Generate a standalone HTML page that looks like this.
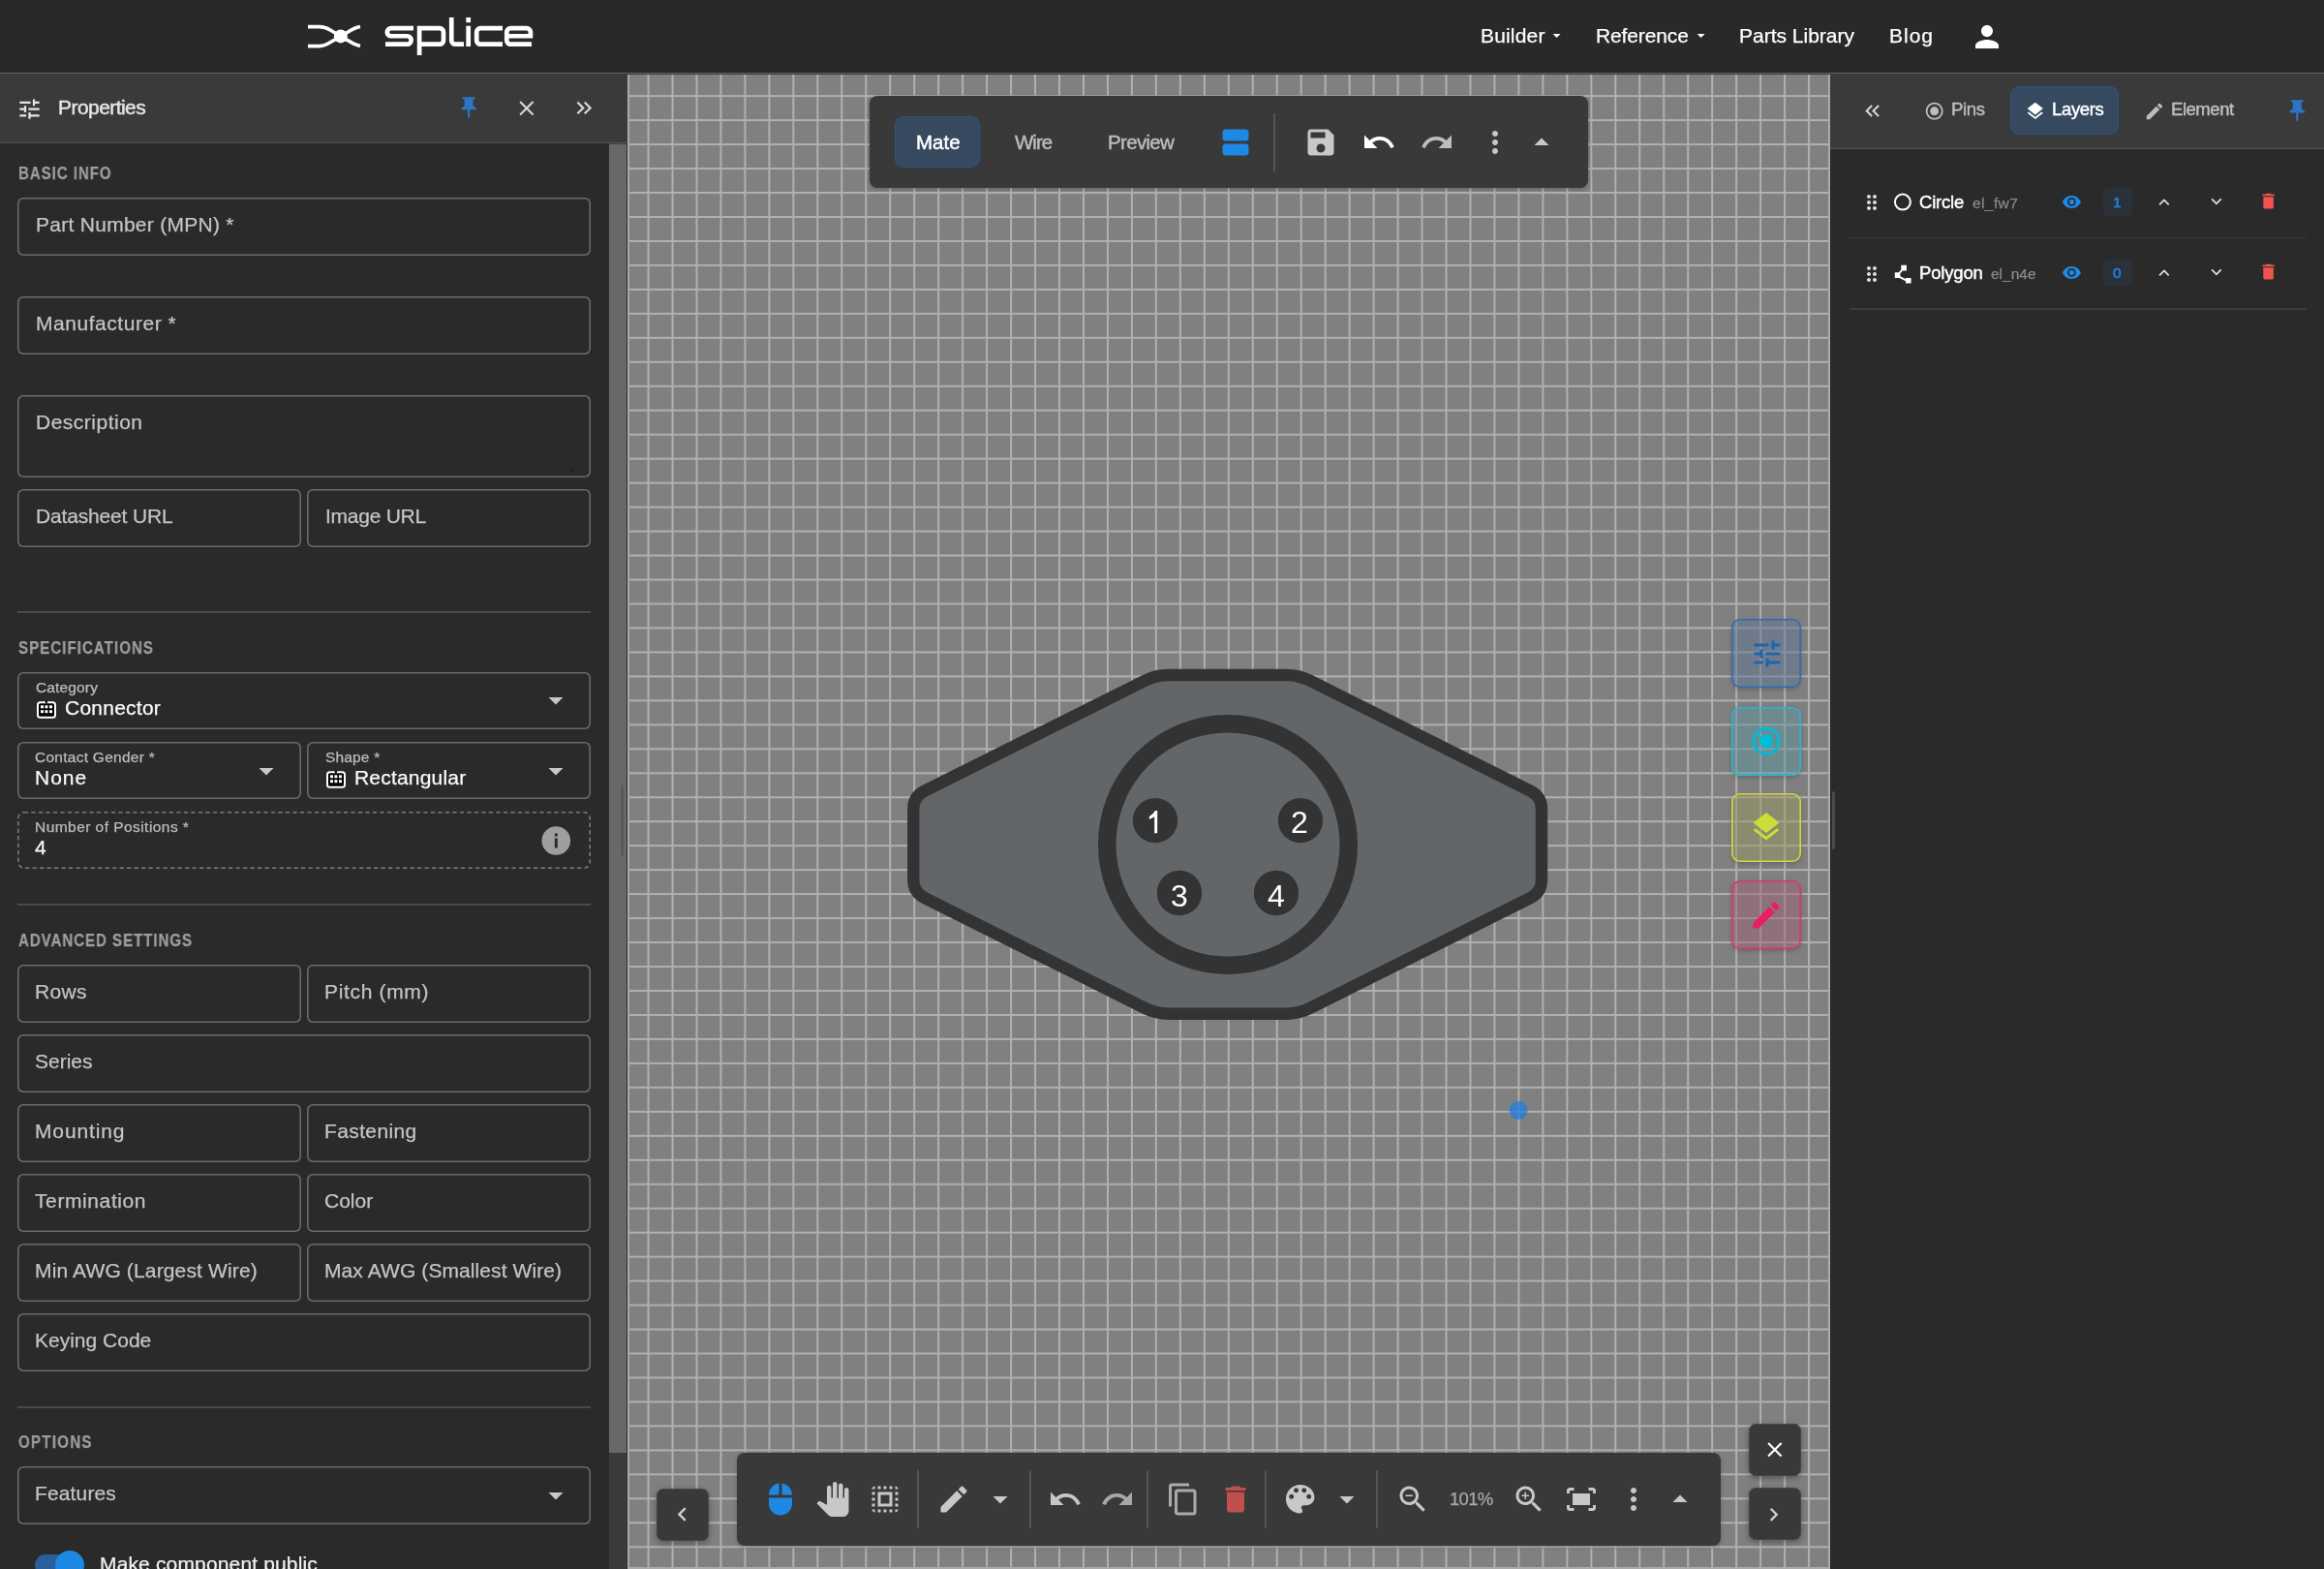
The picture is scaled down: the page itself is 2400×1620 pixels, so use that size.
<!DOCTYPE html>
<html><head><meta charset="utf-8"><style>
*{box-sizing:border-box;margin:0;padding:0}
html,body{width:2400px;height:1620px;overflow:hidden;background:#2a2a2a;font-family:"Liberation Sans",sans-serif}
.a{position:absolute}
.t{white-space:nowrap;will-change:transform;-webkit-text-stroke:0.25px currentColor}
.fld{box-shadow:inset 0 0 0 1.6px #6a6a6a;border-radius:6px}
.div{height:2px;background:#4a4a4a;left:18px;width:592px}
svg{display:block;overflow:visible}
</style></head><body>
<div class="a" style="left:0;top:0;width:2400px;height:75px;background:#292929"></div>
<div class="a" style="left:0;top:75px;width:2400px;height:1px;background:#626262"></div>
<div class="a" style="left:0;top:76px;width:2400px;height:1px;background:#383838"></div>
<svg class="a" style="left:0;top:0" width="600" height="75" viewBox="0 0 600 75">
<g fill="none" stroke="#fff" stroke-width="3.6">
<path d="M318,27.6 H330 C334.5,27.6 337.5,28.8 341,31 L352,37.4 L341,43.8 C337.5,46 334.5,47.6 330,47.6 H318"/>
<path d="M372,27.4 C367,28.3 363,30.5 359,33.2 L352,37.4 L359,41.6 C363,44.3 367,46.5 372,47.6"/>
</g>
<circle cx="351.8" cy="37.4" r="7" fill="#fff"/>
<g fill="none" stroke="#fff" stroke-width="4.7">
<path d="M427,29.2 H403.85 A4,4 0 0 0 399.85,33.2 V33.25 A4,4 0 0 0 403.85,37.25 H420.55 A4,4 0 0 1 424.55,41.25 V41.65 A4,4 0 0 1 420.55,45.65 H398"/>
<path d="M433.1,57 V29.2 H454 A4,4 0 0 1 458,33.2 V41.65 A4,4 0 0 1 454,45.65 H433.1"/>
<path d="M466.25,18 V41.65 A4,4 0 0 0 470.25,45.65 H479"/>
<path d="M483.7,18 V23.2 M483.7,26.8 V48"/>
<path d="M519,29.2 H496.2 A4,4 0 0 0 492.2,33.2 V41.65 A4,4 0 0 0 496.2,45.65 H519"/>
<path d="M523.3,37.25 H547.9 V33.2 A4,4 0 0 0 543.9,29.2 H527.3 A4,4 0 0 0 523.3,33.2 V41.65 A4,4 0 0 0 527.3,45.65 H549"/>
</g></svg>
<div class="a t" style="left:1529.0px;top:24.0px;font-size:21px;line-height:25px;color:#fff;font-weight:normal;letter-spacing:0.167px;">Builder</div>
<svg class="a" style="left:1598.4px;top:27.4px;" width="19.2" height="19.2" viewBox="0 0 24 24"><path fill="#fff" d="M7 10l5 5 5-5z"/></svg>
<div class="a t" style="left:1647.7px;top:24.0px;font-size:21px;line-height:25px;color:#fff;font-weight:normal;letter-spacing:-0.130px;">Reference</div>
<svg class="a" style="left:1747.4px;top:27.4px;" width="19.2" height="19.2" viewBox="0 0 24 24"><path fill="#fff" d="M7 10l5 5 5-5z"/></svg>
<div class="a t" style="left:1796.0px;top:24.0px;font-size:21px;line-height:25px;color:#fff;font-weight:normal;letter-spacing:0.000px;">Parts Library</div>
<div class="a t" style="left:1950.5px;top:24.0px;font-size:21px;line-height:25px;color:#fff;font-weight:normal;letter-spacing:1.000px;">Blog</div>
<svg class="a" style="left:2033.6px;top:19.8px;" width="36" height="36" viewBox="0 0 24 24"><path fill="#fff" d="M12 12c2.21 0 4-1.79 4-4s-1.79-4-4-4-4 1.79-4 4 1.79 4 4 4zm0 2c-2.67 0-8 1.34-8 4v2h16v-2c0-2.66-5.33-4-8-4z"/></svg>
<div class="a" style="left:0;top:77px;width:648px;height:70px;background:#3a3a3a"></div>
<div class="a" style="left:0;top:147px;width:648px;height:1px;background:#555"></div>
<svg class="a" style="left:17.0px;top:98.6px;" width="27" height="27" viewBox="0 0 24 24"><path fill="#e6e6e6" d="M3 17v2h6v-2H3zM3 5v2h10V5H3zm10 16v-2h8v-2h-8v-2h-2v6h2zM7 9v2H3v2h4v2h2V9H7zm14 4v-2H11v2h10zm-6-4h2V7h4V5h-4V3h-2v6z"/></svg>
<div class="a t" style="left:60.2px;top:97.8px;font-size:21px;line-height:25px;color:#e6e6e6;font-weight:normal;letter-spacing:-0.554px;-webkit-text-stroke:0.45px currentColor;">Properties</div>
<svg class="a" style="left:471.1px;top:97.6px;" width="26.3" height="26.3" viewBox="0 0 24 24"><path fill="#2d74c4" d="M16 9V4h1c.55 0 1-.45 1-1s-.45-1-1-1H7c-.55 0-1 .45-1 1s.45 1 1 1h1v5c0 1.66-1.34 3-3 3v2h5.97v7l1 1 1-1v-7H19v-2c-1.66 0-3-1.34-3-3z"/></svg>
<svg class="a" style="left:531.4px;top:98.6px;" width="25.7" height="25.7" viewBox="0 0 24 24"><path fill="#d6d6d6" d="M19 6.41L17.59 5 12 10.59 6.41 5 5 6.41 10.59 12 5 17.59 6.41 19 12 13.41 17.59 19 19 17.59 13.41 12z"/></svg>
<svg class="a" style="left:590.3px;top:97.6px;" width="26.8" height="26.8" viewBox="0 0 24 24"><path fill="#d6d6d6" d="M6.41 6L5 7.41 9.58 12 5 16.59 6.41 18l6-6zM13 6l-1.41 1.41L16.17 12l-4.58 4.59L13 18l6-6z"/></svg>
<div class="a" style="left:629px;top:148px;width:19px;height:1472px;background:#3b3b3b"></div>
<div class="a" style="left:629px;top:149px;width:17.5px;height:1351px;background:#686868"></div>
<div class="a" style="left:646.5px;top:148px;width:1.5px;height:1472px;background:#2f2f2f"></div>
<div class="a t" style="left:18.5px;top:168.8px;font-size:17.5px;line-height:21px;color:#9e9e9e;font-weight:bold;letter-spacing:1.111px;transform:scaleX(0.86);transform-origin:0 0;">BASIC INFO</div>
<div class="a fld" style="left:18px;top:204px;width:592px;height:60px"></div>
<div class="a t" style="left:37.0px;top:218.5px;font-size:21px;line-height:25px;color:#c4c4c4;font-weight:normal;letter-spacing:0.278px;">Part Number (MPN) *</div>
<div class="a fld" style="left:18px;top:306px;width:592px;height:60px"></div>
<div class="a t" style="left:37.0px;top:320.5px;font-size:21px;line-height:25px;color:#c4c4c4;font-weight:normal;letter-spacing:0.538px;">Manufacturer *</div>
<div class="a fld" style="left:18px;top:408px;width:592px;height:85px"></div>
<div class="a t" style="left:37.0px;top:422.9px;font-size:21px;line-height:25px;color:#c4c4c4;font-weight:normal;letter-spacing:0.500px;">Description</div>
<svg class="a" style="left:588px;top:483px" width="6" height="6"><circle cx="3" cy="3" r="1" fill="#111"/></svg>
<div class="a fld" style="left:18px;top:505px;width:293px;height:60px"></div>
<div class="a t" style="left:37.0px;top:519.8px;font-size:21px;line-height:25px;color:#c4c4c4;font-weight:normal;letter-spacing:-0.167px;">Datasheet URL</div>
<div class="a fld" style="left:317px;top:505px;width:293px;height:60px"></div>
<div class="a t" style="left:336.2px;top:519.8px;font-size:21px;line-height:25px;color:#c4c4c4;font-weight:normal;letter-spacing:-0.250px;">Image URL</div>
<div class="a div" style="top:631px"></div>
<div class="a t" style="left:18.5px;top:658.7px;font-size:17.5px;line-height:21px;color:#9e9e9e;font-weight:bold;letter-spacing:1.231px;transform:scaleX(0.86);transform-origin:0 0;">SPECIFICATIONS</div>
<div class="a fld" style="left:18px;top:694px;width:592px;height:59px"></div>
<div class="a t" style="left:36.5px;top:700.1px;font-size:15.5px;line-height:19px;color:#bdbdbd;font-weight:normal;letter-spacing:0.143px;">Category</div>
<div class="a t" style="left:66.7px;top:718.0px;font-size:21px;line-height:25px;color:#fafafa;font-weight:normal;letter-spacing:0.245px;">Connector</div>
<svg class="a" style="left:37px;top:722.5px" width="22" height="20" viewBox="0 0 22 20"><rect x="2" y="2.2" width="18" height="15.5" rx="2.5" fill="#000" stroke="#fff" stroke-width="2"/><path d="M9.6 1 h2.6 l-0.6 2.5 h-1.4z" fill="#000"/><g fill="#fff"><rect x="5" y="5.3" width="3" height="3"/><rect x="9.4" y="5.3" width="3" height="3"/><rect x="14" y="5.3" width="3" height="3"/><rect x="5" y="10.2" width="3" height="3"/><rect x="9.4" y="10.2" width="3" height="3"/><rect x="14" y="10.2" width="3" height="3"/></g></svg>
<svg class="a" style="left:556.1px;top:705.4px;" width="36" height="36" viewBox="0 0 24 24"><path fill="#c8c8c8" d="M7 10l5 5 5-5z"/></svg>
<div class="a fld" style="left:18px;top:766px;width:293px;height:59px"></div>
<div class="a t" style="left:36.1px;top:772.1px;font-size:15.5px;line-height:19px;color:#bdbdbd;font-weight:normal;letter-spacing:0.267px;">Contact Gender *</div>
<div class="a t" style="left:36.1px;top:790.3px;font-size:21px;line-height:25px;color:#fafafa;font-weight:normal;letter-spacing:1.000px;">None</div>
<svg class="a" style="left:257.3px;top:777.5px;" width="36" height="36" viewBox="0 0 24 24"><path fill="#c8c8c8" d="M7 10l5 5 5-5z"/></svg>
<div class="a fld" style="left:317px;top:766px;width:293px;height:59px"></div>
<div class="a t" style="left:335.7px;top:772.1px;font-size:15.5px;line-height:19px;color:#bdbdbd;font-weight:normal;letter-spacing:0.168px;">Shape *</div>
<svg class="a" style="left:336px;top:794.5px" width="22" height="20" viewBox="0 0 22 20"><rect x="2" y="2.2" width="18" height="15.5" rx="2.5" fill="#000" stroke="#fff" stroke-width="2"/><path d="M9.6 1 h2.6 l-0.6 2.5 h-1.4z" fill="#000"/><g fill="#fff"><rect x="5" y="5.3" width="3" height="3"/><rect x="9.4" y="5.3" width="3" height="3"/><rect x="14" y="5.3" width="3" height="3"/><rect x="5" y="10.2" width="3" height="3"/><rect x="9.4" y="10.2" width="3" height="3"/><rect x="14" y="10.2" width="3" height="3"/></g></svg>
<div class="a t" style="left:366.4px;top:790.3px;font-size:21px;line-height:25px;color:#fafafa;font-weight:normal;letter-spacing:0.200px;">Rectangular</div>
<svg class="a" style="left:556.1px;top:777.5px;" width="36" height="36" viewBox="0 0 24 24"><path fill="#c8c8c8" d="M7 10l5 5 5-5z"/></svg>
<svg class="a" style="left:18px;top:838px" width="592" height="59"><rect x="0.8" y="0.8" width="590.4" height="57.4" rx="6" fill="none" stroke="#7a7a7a" stroke-width="1.6" stroke-dasharray="4.4 3.1"/></svg>
<div class="a t" style="left:36.1px;top:844.4px;font-size:15.5px;line-height:19px;color:#bdbdbd;font-weight:normal;letter-spacing:0.450px;">Number of Positions *</div>
<div class="a t" style="left:36.1px;top:861.8px;font-size:21px;line-height:25px;color:#fafafa;font-weight:normal;">4</div>
<svg class="a" style="left:559px;top:853px" width="30" height="30" viewBox="0 0 30 30"><circle cx="15.3" cy="15" r="14.8" fill="#9e9e9e"/><rect x="13.8" y="12.5" width="3" height="10" fill="#2a2a2a"/><rect x="13.8" y="7.5" width="3" height="3" fill="#2a2a2a"/></svg>
<div class="a div" style="top:933px"></div>
<div class="a t" style="left:18.5px;top:960.8px;font-size:17.5px;line-height:21px;color:#9e9e9e;font-weight:bold;letter-spacing:1.125px;transform:scaleX(0.86);transform-origin:0 0;">ADVANCED SETTINGS</div>
<div class="a fld" style="left:18px;top:996px;width:293px;height:60px"></div>
<div class="a t" style="left:36.4px;top:1010.5px;font-size:21px;line-height:25px;color:#c4c4c4;font-weight:normal;letter-spacing:0.333px;">Rows</div>
<div class="a fld" style="left:317px;top:996px;width:293px;height:60px"></div>
<div class="a t" style="left:335.4px;top:1010.5px;font-size:21px;line-height:25px;color:#c4c4c4;font-weight:normal;letter-spacing:0.667px;">Pitch (mm)</div>
<div class="a fld" style="left:18px;top:1068px;width:592px;height:60px"></div>
<div class="a t" style="left:36.4px;top:1082.5px;font-size:21px;line-height:25px;color:#c4c4c4;font-weight:normal;letter-spacing:0.000px;">Series</div>
<div class="a fld" style="left:18px;top:1140px;width:293px;height:60px"></div>
<div class="a t" style="left:36.4px;top:1154.5px;font-size:21px;line-height:25px;color:#c4c4c4;font-weight:normal;letter-spacing:0.855px;">Mounting</div>
<div class="a fld" style="left:317px;top:1140px;width:293px;height:60px"></div>
<div class="a t" style="left:335.4px;top:1154.5px;font-size:21px;line-height:25px;color:#c4c4c4;font-weight:normal;letter-spacing:0.375px;">Fastening</div>
<div class="a fld" style="left:18px;top:1212px;width:293px;height:60px"></div>
<div class="a t" style="left:36.4px;top:1226.5px;font-size:21px;line-height:25px;color:#c4c4c4;font-weight:normal;letter-spacing:0.600px;">Termination</div>
<div class="a fld" style="left:317px;top:1212px;width:293px;height:60px"></div>
<div class="a t" style="left:335.4px;top:1226.5px;font-size:21px;line-height:25px;color:#c4c4c4;font-weight:normal;letter-spacing:-0.000px;">Color</div>
<div class="a fld" style="left:18px;top:1284px;width:293px;height:60px"></div>
<div class="a t" style="left:36.4px;top:1298.5px;font-size:21px;line-height:25px;color:#c4c4c4;font-weight:normal;letter-spacing:0.142px;">Min AWG (Largest Wire)</div>
<div class="a fld" style="left:317px;top:1284px;width:293px;height:60px"></div>
<div class="a t" style="left:335.4px;top:1298.5px;font-size:21px;line-height:25px;color:#c4c4c4;font-weight:normal;letter-spacing:0.091px;">Max AWG (Smallest Wire)</div>
<div class="a fld" style="left:18px;top:1356px;width:592px;height:60px"></div>
<div class="a t" style="left:36.4px;top:1370.5px;font-size:21px;line-height:25px;color:#c4c4c4;font-weight:normal;letter-spacing:-0.000px;">Keying Code</div>
<div class="a div" style="top:1452px"></div>
<div class="a t" style="left:18.5px;top:1479.0px;font-size:17.5px;line-height:21px;color:#9e9e9e;font-weight:bold;letter-spacing:1.502px;transform:scaleX(0.86);transform-origin:0 0;">OPTIONS</div>
<div class="a fld" style="left:18px;top:1514px;width:592px;height:60px"></div>
<div class="a t" style="left:36.4px;top:1528.5px;font-size:21px;line-height:25px;color:#c4c4c4;font-weight:normal;letter-spacing:0.143px;">Features</div>
<svg class="a" style="left:556.1px;top:1525.5px;" width="36" height="36" viewBox="0 0 24 24"><path fill="#c8c8c8" d="M7 10l5 5 5-5z"/></svg>
<div class="a" style="left:36px;top:1605px;width:50px;height:22px;border-radius:11px;background:#2a5f9e"></div>
<div class="a" style="left:57px;top:1600.7px;width:30px;height:30px;border-radius:15px;background:#1e88e5"></div>
<div class="a t" style="left:103.3px;top:1602.3px;font-size:21px;line-height:25px;color:#f0f0f0;font-weight:normal;letter-spacing:0.150px;">Make component public</div>
<div class="a" style="left:648px;top:77px;width:1242px;height:1543px;background-color:#808080;
background-image:linear-gradient(90deg,#b0b0b0 0,#b0b0b0 1.5px,transparent 1.5px),linear-gradient(180deg,#b0b0b0 0,#b0b0b0 1.5px,transparent 1.5px);
background-size:24.97px 24.97px;background-position:20.56px 21.15px"></div>
<div class="a" style="left:648px;top:77px;width:2px;height:1543px;background:#aaa"></div>
<div class="a" style="left:1888px;top:77px;width:2px;height:1543px;background:#aaa"></div>
<div class="a" style="left:648px;top:1618px;width:1242px;height:2px;background:#aaa"></div>
<svg class="a" style="left:0;top:0" width="2400" height="1620" viewBox="0 0 2400 1620">
<path d="M1182.37,702.81 Q1194.00,697.00 1207.00,697.00 L1328.20,697.00 Q1341.20,697.00 1352.83,702.81 L1580.37,816.59 Q1592.00,822.40 1592.00,835.40 L1592.00,908.30 Q1592.00,921.30 1580.37,927.11 L1352.83,1040.89 Q1341.20,1046.70 1328.20,1046.70 L1207.00,1046.70 Q1194.00,1046.70 1182.37,1040.89 L954.88,927.11 Q943.25,921.30 943.25,908.30 L943.25,835.40 Q943.25,822.40 954.88,816.59 Z" fill="#636669" stroke="#333" stroke-width="12.4" stroke-linejoin="round"/>
<circle cx="1268" cy="872" r="124.75" fill="none" stroke="#333" stroke-width="18.5"/>
<g fill="#333"><circle cx="1193" cy="847.1" r="23.2"/><circle cx="1343" cy="847.1" r="23.2"/><circle cx="1218" cy="922" r="23.2"/><circle cx="1318" cy="922" r="23.2"/></g>
<g fill="#fff" font-family="Liberation Sans" font-size="32" text-anchor="middle">
</g><path d="M1192.2,860.2 V843.3 Q1189.6,845 1186.9,845.9 V842.9 Q1190.9,840.8 1193,837 H1195.2 V860.2 Z" fill="#fff"/><g fill="#fff" font-family="Liberation Sans" font-size="32" text-anchor="middle"><text x="1342" y="860.3">2</text><text x="1218" y="935.5">3</text><text x="1318" y="935.5">4</text></g>
<circle cx="1568.1" cy="1146.5" r="9.4" fill="#1e7fe0" fill-opacity="0.75"/>
</svg>
<div class="a" style="left:898px;top:99px;width:742px;height:95px;background:#393939;border-radius:8px;box-shadow:0 1px 4px rgba(0,0,0,0.25)"></div>
<div class="a" style="left:923.6px;top:120.3px;width:88.4px;height:53px;background:#36495f;border:1.5px solid #2d5385;border-radius:9px"></div>
<div class="a t" style="left:946.0px;top:133.7px;font-size:20.5px;line-height:25px;color:#fff;font-weight:normal;letter-spacing:-0.002px;-webkit-text-stroke:0.45px currentColor;">Mate</div>
<div class="a t" style="left:1047.8px;top:133.7px;font-size:20.5px;line-height:25px;color:#bdbdbd;font-weight:normal;letter-spacing:-0.998px;-webkit-text-stroke:0.45px currentColor;">Wire</div>
<div class="a t" style="left:1144.0px;top:133.7px;font-size:20.5px;line-height:25px;color:#bdbdbd;font-weight:normal;letter-spacing:-0.668px;-webkit-text-stroke:0.45px currentColor;">Preview</div>
<svg class="a" style="left:1257.5px;top:128.5px;" width="36" height="36" viewBox="0 0 24 24"><path fill="#1e88e5" d="M19 13H5c-1.1 0-2 .9-2 2v4c0 1.1.9 2 2 2h14c1.1 0 2-.9 2-2v-4c0-1.1-.9-2-2-2zm0-10H5c-1.1 0-2 .9-2 2v4c0 1.1.9 2 2 2h14c1.1 0 2-.9 2-2V5c0-1.1-.9-2-2-2z"/></svg>
<div class="a" style="left:1314.5px;top:117px;width:2px;height:60px;background:#555"></div>
<svg class="a" style="left:1345.5px;top:128.5px;" width="36" height="36" viewBox="0 0 24 24"><path fill="#c8c8c8" d="M17 3H5c-1.11 0-2 .9-2 2v14c0 1.1.89 2 2 2h14c1.1 0 2-.9 2-2V7l-4-4zm-5 16c-1.66 0-3-1.34-3-3s1.34-3 3-3 3 1.34 3 3-1.34 3-3 3zm3-10H5V5h10v4z"/></svg>
<svg class="a" style="left:1405.7px;top:128.5px;" width="36" height="36" viewBox="0 0 24 24"><path fill="#ffffff" d="M12.5 8c-2.65 0-5.05.99-6.9 2.6L2 7v9h9l-3.62-3.62c1.39-1.16 3.16-1.88 5.12-1.88 3.54 0 6.55 2.31 7.6 5.5l2.37-.78C21.08 11.03 17.15 8 12.5 8z"/></svg>
<svg class="a" style="left:1465.7px;top:128.5px;" width="36" height="36" viewBox="0 0 24 24"><path fill="#bdbdbd" d="M18.4 10.6C16.55 8.99 14.15 8 11.5 8c-4.65 0-8.58 3.03-9.96 7.22L3.9 16c1.05-3.19 4.05-5.5 7.6-5.5 1.95 0 3.73.72 5.12 1.88L13 16h9V7l-3.6 3.6z"/></svg>
<svg class="a" style="left:1525.6px;top:128.5px;" width="36" height="36" viewBox="0 0 24 24"><path fill="#c8c8c8" d="M12 8c1.1 0 2-.9 2-2s-.9-2-2-2-2 .9-2 2 .9 2 2 2zm0 2c-1.1 0-2 .9-2 2s.9 2 2 2 2-.9 2-2-.9-2-2-2zm0 6c-1.1 0-2 .9-2 2s.9 2 2 2 2-.9 2-2-.9-2-2-2z"/></svg>
<svg class="a" style="left:1573.8px;top:128.5px;" width="36" height="36" viewBox="0 0 24 24"><path fill="#c8c8c8" d="M7 14l5-5 5 5z"/></svg>
<div class="a" style="left:1788px;top:639.4px;width:72px;height:71px;box-shadow:inset 0 0 0 1.6px #2f6db3,0 2px 5px rgba(0,0,0,0.2);background:rgba(94,118,148,0.5);border-radius:9px"></div>

<svg class="a" style="left:1806.5px;top:657.4px;" width="36" height="36" viewBox="0 0 24 24"><path fill="#1e64b0" d="M3 17v2h6v-2H3zM3 5v2h10V5H3zm10 16v-2h8v-2h-8v-2h-2v6h2zM7 9v2H3v2h4v2h2V9H7zm14 4v-2H11v2h10zm-6-4h2V7h4V5h-4V3h-2v6z"/></svg>
<div class="a" style="left:1788px;top:729.5px;width:72px;height:71px;box-shadow:inset 0 0 0 1.6px #29b6d3,0 2px 5px rgba(0,0,0,0.2);background:rgba(94,148,158,0.5);border-radius:9px"></div>

<svg class="a" style="left:1788px;top:729.5px" width="72" height="71"><circle cx="36" cy="35.3" r="13" fill="none" stroke="#00bcd8" stroke-width="3"/><circle cx="36" cy="35.3" r="7.3" fill="#00bcd8"/></svg>
<div class="a" style="left:1788px;top:819.3px;width:72px;height:71px;box-shadow:inset 0 0 0 1.6px #cfd83c,0 2px 5px rgba(0,0,0,0.2);background:rgba(150,150,96,0.5);border-radius:9px"></div>

<svg class="a" style="left:1806.0px;top:836.0px;" width="36" height="36" viewBox="0 0 24 24"><path fill="#cddc39" d="M11.99 18.54l-7.37-5.73L3 14.07l9 7 9-7-1.630-1.27-7.38 5.74zM12 16l7.36-5.73L21 9l-9-7-9 7 1.63 1.27L12 16z"/></svg>
<div class="a" style="left:1788px;top:909.4px;width:72px;height:71px;box-shadow:inset 0 0 0 1.6px #d8376b,0 2px 5px rgba(0,0,0,0.2);background:rgba(158,98,116,0.5);border-radius:9px"></div>

<svg class="a" style="left:1805.7px;top:927.4px;" width="36" height="36" viewBox="0 0 24 24"><path fill="#e91e63" d="M3 17.25V21h3.75L17.81 9.94l-3.75-3.75L3 17.25zM20.71 7.04c.39-.39.39-1.02 0-1.41l-2.34-2.34c-.39-.39-1.02-.39-1.41 0l-1.83 1.83 3.75 3.75 1.83-1.83z"/></svg>
<div class="a" style="left:761px;top:1500px;width:1016px;height:96px;background:#393939;border-radius:8px;box-shadow:0 1px 4px rgba(0,0,0,0.25)"></div>
<svg class="a" style="left:788.0px;top:1530.0px;" width="36" height="36" viewBox="0 0 24 24"><path fill="#1e88e5" d="M13 1.07V9h7c0-4.08-3.05-7.44-7-7.93zM4 15c0 4.42 3.58 8 8 8s8-3.58 8-8v-4H4v4zm7-13.93C7.05 1.56 4 4.92 4 9h7V1.07z"/></svg>
<svg class="a" style="left:842.0px;top:1530.0px;" width="36" height="36" viewBox="0 0 24 24"><path fill="#c8c8c8" d="M23 5.5V20c0 2.2-1.8 4-4 4h-7.3c-1.08 0-2.1-.43-2.85-1.19L1 14.83s1.26-1.23 1.3-1.25c.22-.19.49-.29.79-.29.22 0 .42.06.6.16.04.01 4.31 2.46 4.31 2.46V4c0-.83.67-1.5 1.5-1.5S11 3.17 11 4v7h1V1.5c0-.83.67-1.5 1.5-1.5S15 .67 15 1.5V11h1V2.5c0-.83.67-1.5 1.5-1.5s1.5.67 1.5 1.5V11h1V5.5c0-.83.67-1.5 1.5-1.5s1.5.67 1.5 1.5z"/></svg>
<svg class="a" style="left:896.1px;top:1530.0px;" width="36" height="36" viewBox="0 0 24 24"><path fill="#c8c8c8" d="M3 5h2V3c-1.1 0-2 .9-2 2zm0 8h2v-2H3v2zm4 8h2v-2H7v2zM3 9h2V7H3v2zm10-6h-2v2h2V3zm6 0v2h2c0-1.1-.9-2-2-2zM5 21v-2H3c0 1.1.9 2 2 2zm-2-4h2v-2H3v2zM9 3H7v2h2V3zm2 18h2v-2h-2v2zm8-8h2v-2h-2v2zm0 8c1.1 0 2-.9 2-2h-2v2zm0-12h2V7h-2v2zm0 8h2v-2h-2v2zm-4 4h2v-2h-2v2zm0-16h2V3h-2v2zM7 17h10V7H7v10zm2-8h6v6H9V9z"/></svg>
<div class="a" style="left:947px;top:1518px;width:2px;height:60px;background:#555"></div>
<svg class="a" style="left:967.1px;top:1530.0px;" width="36" height="36" viewBox="0 0 24 24"><path fill="#c8c8c8" d="M3 17.25V21h3.75L17.81 9.94l-3.75-3.75L3 17.25zM20.71 7.04c.39-.39.39-1.02 0-1.41l-2.34-2.34c-.39-.39-1.02-.39-1.41 0l-1.83 1.83 3.75 3.75 1.83-1.83z"/></svg>
<svg class="a" style="left:1015.0px;top:1530.0px;" width="36" height="36" viewBox="0 0 24 24"><path fill="#c8c8c8" d="M7 10l5 5 5-5z"/></svg>
<div class="a" style="left:1063px;top:1518px;width:2px;height:60px;background:#555"></div>
<svg class="a" style="left:1082.4px;top:1530.0px;" width="36" height="36" viewBox="0 0 24 24"><path fill="#c8c8c8" d="M12.5 8c-2.65 0-5.05.99-6.9 2.6L2 7v9h9l-3.62-3.62c1.39-1.16 3.16-1.88 5.12-1.88 3.54 0 6.55 2.31 7.6 5.5l2.37-.78C21.08 11.03 17.15 8 12.5 8z"/></svg>
<svg class="a" style="left:1136.3px;top:1530.0px;" width="36" height="36" viewBox="0 0 24 24"><path fill="#a8a8a8" d="M18.4 10.6C16.55 8.99 14.15 8 11.5 8c-4.65 0-8.58 3.03-9.96 7.22L3.9 16c1.05-3.19 4.05-5.5 7.6-5.5 1.95 0 3.73.72 5.12 1.88L13 16h9V7l-3.6 3.6z"/></svg>
<div class="a" style="left:1184px;top:1518px;width:2px;height:60px;background:#555"></div>
<svg class="a" style="left:1203.5px;top:1530.0px;" width="36" height="36" viewBox="0 0 24 24"><path fill="#ababab" d="M16 1H4c-1.1 0-2 .9-2 2v14h2V3h12V1zm3 4H8c-1.1 0-2 .9-2 2v14c0 1.1.9 2 2 2h11c1.1 0 2-.9 2-2V7c0-1.1-.9-2-2-2zm0 16H8V7h11v14z"/></svg>
<svg class="a" style="left:1257.5px;top:1530.0px;" width="36" height="36" viewBox="0 0 24 24"><path fill="#c0504d" d="M6 19c0 1.1.9 2 2 2h8c1.1 0 2-.9 2-2V7H6v12zM19 4h-3.5l-1-1h-5l-1 1H5v2h14V4z"/></svg>
<div class="a" style="left:1305.5px;top:1518px;width:2px;height:60px;background:#555"></div>
<svg class="a" style="left:1323.3px;top:1528.1px;" width="39.4" height="39.4" viewBox="0 0 24 24"><path fill="#c8c8c8" d="M12 3c-4.97 0-9 4.03-9 9s4.03 9 9 9c.83 0 1.5-.67 1.5-1.5 0-.39-.15-.74-.39-1.01-.23-.26-.38-.61-.38-.99 0-.83.67-1.5 1.5-1.5H16c2.76 0 5-2.24 5-5 0-4.42-4.03-8-9-8zm-5.5 9c-.83 0-1.5-.67-1.5-1.5S5.67 9 6.5 9 8 9.67 8 10.5 7.33 12 6.5 12zm3-4C8.670 8 8 7.33 8 6.5S8.67 5 9.5 5s1.5.67 1.5 1.5S10.33 8 9.5 8zm5 0c-.83 0-1.5-.67-1.5-1.5S13.67 5 14.5 5s1.5.67 1.5 1.5S15.33 8 14.5 8zm3 4c-.83 0-1.5-.67-1.5-1.5S16.67 9 17.5 9s1.5.67 1.5 1.5-.67 1.5-1.5 1.5z"/></svg>
<svg class="a" style="left:1372.8px;top:1530.0px;" width="36" height="36" viewBox="0 0 24 24"><path fill="#c8c8c8" d="M7 10l5 5 5-5z"/></svg>
<div class="a" style="left:1421px;top:1518px;width:2px;height:60px;background:#555"></div>
<svg class="a" style="left:1440.5px;top:1530.0px;" width="36" height="36" viewBox="0 0 24 24"><path fill="#c8c8c8" d="M15.5 14h-.79l-.28-.27C15.41 12.59 16 11.11 16 9.5 16 5.91 13.09 3 9.5 3S3 5.91 3 9.5 5.91 16 9.5 16c1.61 0 3.090-.59 4.23-1.57l.27.28v.79l5 4.99L20.49 19l-4.99-5zm-6 0C7.01 14 5 11.99 5 9.5S7.01 5 9.5 5 14 7.01 14 9.5 11.99 14 9.5 14zM7 9h5v1H7z"/></svg>
<div class="a t" style="left:1496.5px;top:1536.9px;font-size:18.5px;line-height:22px;color:#a8a8a8;font-weight:normal;letter-spacing:-0.667px;">101%</div>
<svg class="a" style="left:1560.8px;top:1530.0px;" width="36" height="36" viewBox="0 0 24 24"><path fill="#c8c8c8" d="M15.5 14h-.79l-.28-.27C15.41 12.59 16 11.11 16 9.5 16 5.91 13.09 3 9.5 3S3 5.91 3 9.5 5.91 16 9.5 16c1.61 0 3.09-.59 4.23-1.57l.27.28v.79l5 4.99L20.49 19l-4.99-5zm-6 0C7.01 14 5 11.99 5 9.5S7.01 5 9.5 5 14 7.01 14 9.5 11.99 14 9.5 14zm2.5-4h-2v2H9v-2H7V9h2V7h1v2h2v1z"/></svg>
<svg class="a" style="left:1614.7px;top:1530.0px;" width="36" height="36" viewBox="0 0 24 24"><path fill="#c8c8c8" d="M17 4h3c1.1 0 2 .9 2 2v2h-2V6h-3V4zM4 8V6h3V4H4c-1.1 0-2 .9-2 2v2h2zm16 8v2h-3v2h3c1.1 0 2-.9 2-2v-2h-2zM7 18H4v-2H2v2c0 1.1.9 2 2 2h3v-2zM18 8H6v8h12V8z"/></svg>
<svg class="a" style="left:1668.5px;top:1530.0px;" width="36" height="36" viewBox="0 0 24 24"><path fill="#c8c8c8" d="M12 8c1.1 0 2-.9 2-2s-.9-2-2-2-2 .9-2 2 .9 2 2 2zm0 2c-1.1 0-2 .9-2 2s.9 2 2 2 2-.9 2-2-.9-2-2-2zm0 6c-1.1 0-2 .9-2 2s.9 2 2 2 2-.9 2-2-.9-2-2-2z"/></svg>
<svg class="a" style="left:1716.5px;top:1530.0px;" width="36" height="36" viewBox="0 0 24 24"><path fill="#c8c8c8" d="M7 14l5-5 5 5z"/></svg>
<div class="a" style="left:678px;top:1536.5px;width:54px;height:54px;background:#393939;border:1px solid #464646;border-radius:7px;box-shadow:0 2px 6px rgba(0,0,0,0.35)"></div>
<svg class="a" style="left:689.5px;top:1548.7px;" width="29" height="29" viewBox="0 0 24 24"><path fill="#cfcfcf" d="M15.41 7.41L14 6l-6 6 6 6 1.41-1.41L10.83 12z"/></svg>
<div class="a" style="left:1806px;top:1470px;width:54px;height:54px;background:#393939;border:1px solid #464646;border-radius:7px;box-shadow:0 2px 6px rgba(0,0,0,0.35)"></div>
<svg class="a" style="left:1820.3px;top:1484.3px;" width="25.7" height="25.7" viewBox="0 0 24 24"><path fill="#ffffff" d="M19 6.41L17.59 5 12 10.59 6.41 5 5 6.41 10.59 12 5 17.59 6.41 19 12 13.41 17.59 19 19 17.59 13.41 12z"/></svg>
<div class="a" style="left:1806px;top:1536px;width:54px;height:54px;background:#393939;border:1px solid #464646;border-radius:7px;box-shadow:0 2px 6px rgba(0,0,0,0.35)"></div>
<svg class="a" style="left:1818.4px;top:1549.5px;" width="27.6" height="27.6" viewBox="0 0 24 24"><path fill="#cfcfcf" d="M10 6L8.59 7.41 13.17 12l-4.58 4.58L10 18l6-6z"/></svg>
<div class="a" style="left:1890px;top:77px;width:510px;height:76px;background:#3a3a3a"></div>
<div class="a" style="left:1890px;top:153px;width:510px;height:1px;background:#555"></div>
<svg class="a" style="left:1920.8px;top:102.1px;" width="25" height="25" viewBox="0 0 24 24"><path fill="#d6d6d6" d="M17.59 18L19 16.59 14.42 12 19 7.41 17.59 6l-6 6zM11 18l1.41-1.41L7.83 12l4.58-4.59L11 6l-6 6z"/></svg>
<svg class="a" style="left:1987.2px;top:103.5px;" width="21.4" height="21.4" viewBox="0 0 24 24"><path fill="#bdbdbd" d="M12 7c-2.76 0-5 2.24-5 5s2.24 5 5 5 5-2.24 5-5-2.24-5-5-5zm0-5C6.48 2 2 6.48 2 12s4.48 10 10 10 10-4.48 10-10S17.52 2 12 2zm0 18c-4.42 0-8-3.580-8-8s3.58-8 8-8 8 3.58 8 8-3.58 8-8 8z"/></svg>
<div class="a t" style="left:2015.0px;top:101.7px;font-size:18.6px;line-height:22px;color:#bdbdbd;font-weight:normal;letter-spacing:-0.335px;-webkit-text-stroke:0.45px currentColor;">Pins</div>
<div class="a" style="left:2075.6px;top:89px;width:112.4px;height:50px;background:#36495f;border:1.5px solid #2d5385;border-radius:9px"></div>
<svg class="a" style="left:2091.3px;top:104.2px;" width="21.6" height="21.6" viewBox="0 0 24 24"><path fill="#ffffff" d="M11.99 18.54l-7.37-5.73L3 14.07l9 7 9-7-1.630-1.27-7.38 5.74zM12 16l7.36-5.73L21 9l-9-7-9 7 1.63 1.27L12 16z"/></svg>
<div class="a t" style="left:2119.0px;top:101.7px;font-size:18.6px;line-height:22px;color:#ffffff;font-weight:normal;letter-spacing:-0.400px;-webkit-text-stroke:0.45px currentColor;">Layers</div>
<svg class="a" style="left:2213.9px;top:104.0px;" width="21.9" height="21.9" viewBox="0 0 24 24"><path fill="#bdbdbd" d="M3 17.25V21h3.75L17.81 9.94l-3.75-3.75L3 17.25zM20.71 7.04c.39-.39.39-1.02 0-1.41l-2.34-2.34c-.39-.39-1.02-.39-1.41 0l-1.83 1.83 3.75 3.75 1.83-1.83z"/></svg>
<div class="a t" style="left:2241.7px;top:101.7px;font-size:18.6px;line-height:22px;color:#bdbdbd;font-weight:normal;letter-spacing:-0.501px;-webkit-text-stroke:0.45px currentColor;">Element</div>
<svg class="a" style="left:2359.4px;top:101.0px;" width="26.6" height="26.6" viewBox="0 0 24 24"><path fill="#2d74c4" d="M16 9V4h1c.55 0 1-.45 1-1s-.45-1-1-1H7c-.55 0-1 .45-1 1s.45 1 1 1h1v5c0 1.66-1.34 3-3 3v2h5.97v7l1 1 1-1v-7H19v-2c-1.66 0-3-1.34-3-3z"/></svg>
<svg class="a" style="left:1921.0px;top:197.3px;" width="24" height="24" viewBox="0 0 24 24"><path fill="#dddddd" d="M11 18c0 1.1-.9 2-2 2s-2-.9-2-2 .9-2 2-2 2 .9 2 2zm-2-8c-1.1 0-2 .9-2 2s.9 2 2 2 2-.9 2-2-.9-2-2-2zm0-6c-1.1 0-2 .9-2 2s.9 2 2 2 2-.9 2-2-.9-2-2-2zm6 4c1.1 0 2-.9 2-2s-.9-2-2-2-2 .9-2 2 .9 2 2 2zm0 2c-1.1 0-2 .9-2 2s.9 2 2 2 2-.9 2-2-.9-2-2-2zm0 6c-1.1 0-2 .9-2 2s.9 2 2 2 2-.9 2-2-.9-2-2-2z"/></svg>
<svg class="a" style="left:1955px;top:199.1px" width="20" height="20"><circle cx="9.9" cy="9.6" r="8" fill="none" stroke="#fff" stroke-width="2"/></svg>
<div class="a t" style="left:1982.0px;top:197.8px;font-size:18.5px;line-height:22px;color:#ffffff;font-weight:normal;letter-spacing:-0.200px;-webkit-text-stroke:0.45px currentColor;">Circle</div>
<div class="a t" style="left:2037.0px;top:199.9px;font-size:15.5px;line-height:19px;color:#8a8a8a;font-weight:normal;letter-spacing:0.400px;">el_fw7</div>
<svg class="a" style="left:2128.6px;top:197.8px;" width="20.8" height="20.8" viewBox="0 0 24 24"><path fill="#1e88e5" d="M12 4.5C7 4.5 2.73 7.61 1 12c1.73 4.39 6 7.5 11 7.5s9.27-3.11 11-7.5c-1.73-4.39-6-7.5-11-7.5zM12 17c-2.76 0-5-2.24-5-5s2.24-5 5-5 5 2.24 5 5-2.24 5-5 5zm0-8c-1.66 0-3 1.34-3 3s1.34 3 3 3 3-1.34 3-3-1.34-3-3-3z"/></svg>
<div class="a" style="left:2171.8px;top:194.3px;width:30.2px;height:28.3px;background:#2b3138;border-radius:5px"></div>
<div class="a t" style="left:2182.3px;top:199.1px;font-size:15.5px;line-height:19px;color:#1e88e5;font-weight:normal;-webkit-text-stroke:0.45px currentColor;">1</div>
<svg class="a" style="left:2224.0px;top:197.5px;" width="21.8" height="21.8" viewBox="0 0 24 24"><path fill="#dddddd" d="M12 8l-6 6 1.41 1.41L12 10.83l4.59 4.58L18 14z"/></svg>
<svg class="a" style="left:2277.9px;top:197.0px;" width="21.8" height="21.8" viewBox="0 0 24 24"><path fill="#dddddd" d="M16.59 8.59L12 13.17 7.41 8.59 6 10l6 6 6-6z"/></svg>
<svg class="a" style="left:2332.4px;top:196.9px;" width="21.2" height="21.2" viewBox="0 0 24 24"><path fill="#ef5350" d="M6 19c0 1.1.9 2 2 2h8c1.1 0 2-.9 2-2V7H6v12zM19 4h-3.5l-1-1h-5l-1 1H5v2h14V4z"/></svg>
<div class="a" style="left:1909.5px;top:244.5px;width:472px;height:1.5px;background:#3c3c3c"></div>
<svg class="a" style="left:1921.0px;top:270.5px;" width="24" height="24" viewBox="0 0 24 24"><path fill="#dddddd" d="M11 18c0 1.1-.9 2-2 2s-2-.9-2-2 .9-2 2-2 2 .9 2 2zm-2-8c-1.1 0-2 .9-2 2s.9 2 2 2 2-.9 2-2-.9-2-2-2zm0-6c-1.1 0-2 .9-2 2s.9 2 2 2 2-.9 2-2-.9-2-2-2zm6 4c1.1 0 2-.9 2-2s-.9-2-2-2-2 .9-2 2 .9 2 2 2zm0 2c-1.1 0-2 .9-2 2s.9 2 2 2 2-.9 2-2-.9-2-2-2zm0 6c-1.1 0-2 .9-2 2s.9 2 2 2 2-.9 2-2-.9-2-2-2z"/></svg>
<svg class="a" style="left:1953.6px;top:271.5px;" width="22.4" height="22.4" viewBox="0 0 24 24"><path fill="#ffffff" d="M15 16v1.26l-6-3v-3.17L11.7 8H16V2h-6v4.9L7.3 10H3v6h5l7 3.5V22h6v-6z"/></svg>
<div class="a t" style="left:1982.0px;top:271.0px;font-size:18.5px;line-height:22px;color:#ffffff;font-weight:normal;letter-spacing:-0.168px;-webkit-text-stroke:0.45px currentColor;">Polygon</div>
<div class="a t" style="left:2055.9px;top:273.1px;font-size:15.5px;line-height:19px;color:#8a8a8a;font-weight:normal;letter-spacing:-0.000px;">el_n4e</div>
<svg class="a" style="left:2128.6px;top:271.0px;" width="20.8" height="20.8" viewBox="0 0 24 24"><path fill="#1e88e5" d="M12 4.5C7 4.5 2.73 7.61 1 12c1.73 4.39 6 7.5 11 7.5s9.27-3.11 11-7.5c-1.73-4.39-6-7.5-11-7.5zM12 17c-2.76 0-5-2.24-5-5s2.24-5 5-5 5 2.24 5 5-2.24 5-5 5zm0-8c-1.66 0-3 1.34-3 3s1.34 3 3 3 3-1.34 3-3-1.34-3-3-3z"/></svg>
<div class="a" style="left:2171.8px;top:267.5px;width:30.2px;height:28.3px;background:#2b3138;border-radius:5px"></div>
<div class="a t" style="left:2182.3px;top:272.3px;font-size:15.5px;line-height:19px;color:#1e88e5;font-weight:normal;-webkit-text-stroke:0.45px currentColor;">0</div>
<svg class="a" style="left:2224.0px;top:270.7px;" width="21.8" height="21.8" viewBox="0 0 24 24"><path fill="#dddddd" d="M12 8l-6 6 1.41 1.41L12 10.83l4.59 4.58L18 14z"/></svg>
<svg class="a" style="left:2277.9px;top:270.2px;" width="21.8" height="21.8" viewBox="0 0 24 24"><path fill="#dddddd" d="M16.59 8.59L12 13.17 7.41 8.59 6 10l6 6 6-6z"/></svg>
<svg class="a" style="left:2332.4px;top:270.1px;" width="21.2" height="21.2" viewBox="0 0 24 24"><path fill="#ef5350" d="M6 19c0 1.1.9 2 2 2h8c1.1 0 2-.9 2-2V7H6v12zM19 4h-3.5l-1-1h-5l-1 1H5v2h14V4z"/></svg>
<div class="a" style="left:1909.5px;top:318px;width:472px;height:1.5px;background:#3c3c3c"></div>
<div class="a" style="left:1892px;top:817px;width:3px;height:60px;background:#4a4a4a;border-radius:2px"></div>
<div class="a" style="left:640.5px;top:810px;width:3px;height:74px;background:#5a5a5a;border-radius:2px"></div>
</body></html>
